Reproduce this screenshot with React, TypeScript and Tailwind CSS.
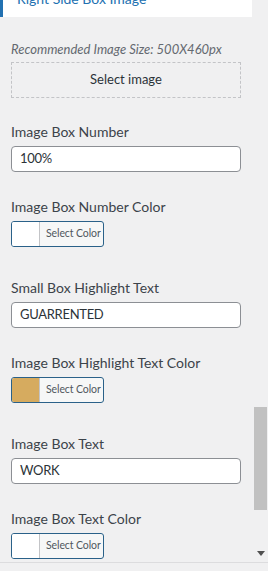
const font = { fontFamily: 'Lato, "Open Sans", sans-serif' };

function TextField({ label, value }: { label: string; value: string }) {
  return (
    <div className="mb-[25px]">
      <div className="text-[14px] leading-[20px] text-[#3c434a] mb-1 whitespace-nowrap">{label}</div>
      <div className="h-[26px] w-[230px] bg-white border border-[#8c8f94] rounded-[4px] px-2 flex items-center text-[13px] tracking-[-0.3px] text-[#2c3338]">
        {value}
      </div>
    </div>
  );
}

function ColorField({ label, color }: { label: string; color: string }) {
  return (
    <div className="mb-[31px]">
      <div className="text-[14px] leading-[20px] text-[#3c434a] mb-1 whitespace-nowrap">{label}</div>
      <button className="h-[26px] w-[93px] flex border border-[#2a6189] rounded-[3px] overflow-hidden bg-[#f6f7f7]">
        <span className="w-[27px] h-full shrink-0" style={{ backgroundColor: color }} />
        <span className="flex-1 h-full border-l border-[#c3c4c7] flex items-center pl-[6px] text-[10.5px] tracking-[-0.1px] text-[#50575e] whitespace-nowrap">
          Select Color
        </span>
      </button>
    </div>
  );
}

export default function App() {
  return (
    <div className="w-[268px] h-[571px] bg-[#f0f0f1] flex flex-col overflow-hidden" style={font}>
      <div className="h-[562px] flex">
        <div className="w-[252px] h-full overflow-hidden">
          <div className="h-[17px] bg-white border-l-[3px] border-[#2271b1] overflow-hidden pl-[14px]">
            <div className="text-[14px] leading-[20px] text-[#2271b1] mt-[-11px] whitespace-nowrap">Right Side Box Image</div>
          </div>
          <div className="px-[11px]">
            <div className="mt-[23px] text-[13px] leading-[18px] italic text-[#646970] whitespace-nowrap">
              Recommended Image Size: 500X460px
            </div>
            <div className="mt-1 h-[36px] w-[230px] border border-dashed border-[#c3c4c7] flex items-center justify-center text-[13px] text-[#2c3338]">
              Select image
            </div>
            <div className="mt-6">
              <TextField label="Image Box Number" value="100%" />
              <ColorField label="Image Box Number Color" color="#ffffff" />
              <TextField label="Small Box Highlight Text" value="GUARRENTED" />
              <ColorField label="Image Box Highlight Text Color" color="#d6ab5f" />
              <TextField label="Image Box Text" value="WORK" />
              <ColorField label="Image Box Text Color" color="#ffffff" />
            </div>
          </div>
        </div>
        <div className="ml-[2px] w-[14px] h-full flex flex-col items-center">
          <div className="mt-[407px] w-[13px] h-[103px] bg-[#c1c1c1] self-start" />
          <div className="flex-1" />
          <svg width="8" height="5" viewBox="0 0 8 5" className="mb-[6px]">
            <polygon points="0,0 8,0 4,5" fill="#505050" />
          </svg>
        </div>
      </div>
      <div className="flex-1 border-t border-[#dcdcde] bg-[#f0f0f1]" />
    </div>
  );
}
